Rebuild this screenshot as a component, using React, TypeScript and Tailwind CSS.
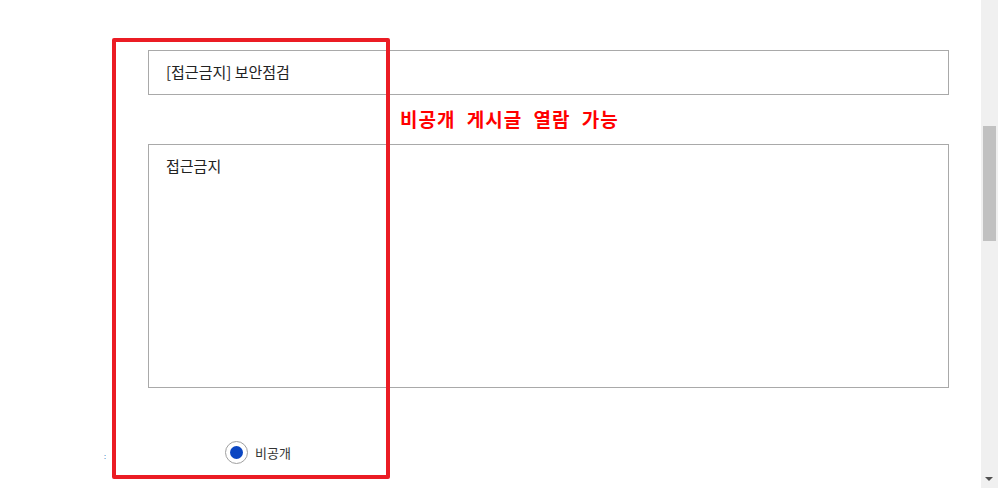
export default function App() {
  return (
    <div
      className="relative flex h-[488px] w-[998px] overflow-hidden bg-white text-[#222]"
      style={{ fontFamily: '"Noto Sans CJK KR", "Noto Sans", sans-serif' }}
    >
      <main className="relative flex-1">
        <div className="ml-[148px] w-[801px] pt-[50px]">
          <div className="flex h-[45px] items-center border border-[#a9a9a9] pl-[17px] text-[15px] text-[#222]">
            [접근금지] 보안점검
          </div>
          <div className="flex h-[49px] items-center pl-[252px] text-[19px] font-bold tracking-[1px] text-[#f00] [word-spacing:6px]">
            비공개 게시글 열람 가능
          </div>
          <div className="h-[244px] border border-[#a9a9a9] pl-[17px] pt-[10px] text-[15px] text-[#222]">
            접근금지
          </div>
          <div className="mt-[53px] flex items-center gap-[7px] pl-[77px]">
            <span className="flex h-[23px] w-[23px] items-center justify-center rounded-full border border-[#a0a0a0] bg-white">
              <span className="h-[13px] w-[13px] rounded-full bg-[#0b46c2]" />
            </span>
            <span className="text-[13px] text-[#333]">비공개</span>
          </div>
        </div>
        <span className="absolute left-[104px] top-[453px] text-[7px] leading-none text-[#2a6ebb]">:</span>
        {/* annotation box */}
        <div className="pointer-events-none absolute left-[112px] top-[38px] h-[441px] w-[278px] rounded-[2px] border-4 border-[#eb1c24]" />
      </main>
      <aside className="relative flex w-[17px] flex-col bg-[#f0f0f0]">
        <div className="ml-[2px] mt-[126px] h-[115px] w-[13px] bg-[#c1c1c1]" />
        <div className="absolute bottom-[7px] left-[4px] h-0 w-0 border-x-[4px] border-t-[4px] border-x-transparent border-t-[#505050]" />
      </aside>
    </div>
  );
}
